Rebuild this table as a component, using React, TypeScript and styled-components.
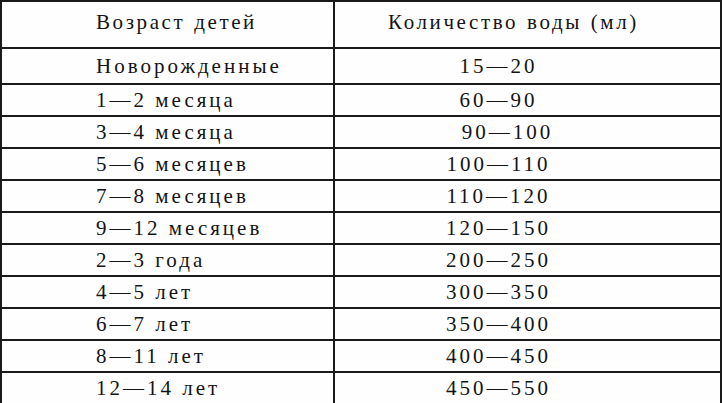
import React from "react";
import styled, { createGlobalStyle } from "styled-components";

const GlobalStyle = createGlobalStyle`
  html, body {
    margin: 0;
    padding: 0;
    background: #fefefe;
  }
`;

interface Row {
  age: string;
  water: string;
  // a few values in the printed table sit slightly off-centre
  shift?: number;
}

const rows: Row[] = [
  { age: "Новорожденные", water: "15—20" },
  { age: "1—2 месяца", water: "60—90" },
  { age: "3—4 месяца", water: "90—100", shift: 18 },
  { age: "5—6 месяцев", water: "100—110" },
  { age: "7—8 месяцев", water: "110—120" },
  { age: "9—12 месяцев", water: "120—150" },
  { age: "2—3 года", water: "200—250" },
  { age: "4—5 лет", water: "300—350" },
  { age: "6—7 лет", water: "350—400" },
  { age: "8—11 лет", water: "400—450" },
  { age: "12—14 лет", water: "450—550" }
];

const Table = styled.table`
  width: 722px;
  height: 403px;
  border-collapse: collapse;
  table-layout: fixed;
  background: #fefefe;
  color: #141414;
  font-family: "Liberation Serif", "Times New Roman", serif;
  font-size: 21px;
  letter-spacing: 3px;
  border: 2px solid #3a3a3a;
`;

const Row = styled.tr<{ height: number }>`
  height: ${(props) => props.height}px;
`;

const HeadCell = styled.th<{ align: "left" | "center" }>`
  font-weight: normal;
  text-align: ${(props) => props.align};
  padding: 0 ${(props) => (props.align === "center" ? "28px" : "0")} 4px
    ${(props) => (props.align === "left" ? "94px" : "0")};
  border: 2px solid #1a1a1a;
  letter-spacing: 2.6px;
  word-spacing: 1px;
  white-space: nowrap;
`;

const AgeCell = styled.td`
  width: 331px;
  padding: 0 0 0 94px;
  border: 2px solid #1a1a1a;
  white-space: nowrap;
  line-height: 1;
`;

const WaterCell = styled.td<{ shift?: number }>`
  text-align: center;
  padding: 0 58px 0 ${(props) => props.shift || 0}px;
  border: 2px solid #1a1a1a;
  white-space: nowrap;
  line-height: 1;
`;

export default function App() {
  return (
    <>
      <GlobalStyle />
      <Table>
        <colgroup>
          <col style={{ width: 333 }} />
          <col />
        </colgroup>
        <thead>
          <Row height={47}>
            <HeadCell align="left">Возраст детей</HeadCell>
            <HeadCell align="center">Количество воды (мл)</HeadCell>
          </Row>
        </thead>
        <tbody>
          {rows.map((row, i) => (
            <Row key={row.age} height={i === 0 ? 36 : 32}>
              <AgeCell>{row.age}</AgeCell>
              <WaterCell shift={row.shift}>{row.water}</WaterCell>
            </Row>
          ))}
        </tbody>
      </Table>
    </>
  );
}
